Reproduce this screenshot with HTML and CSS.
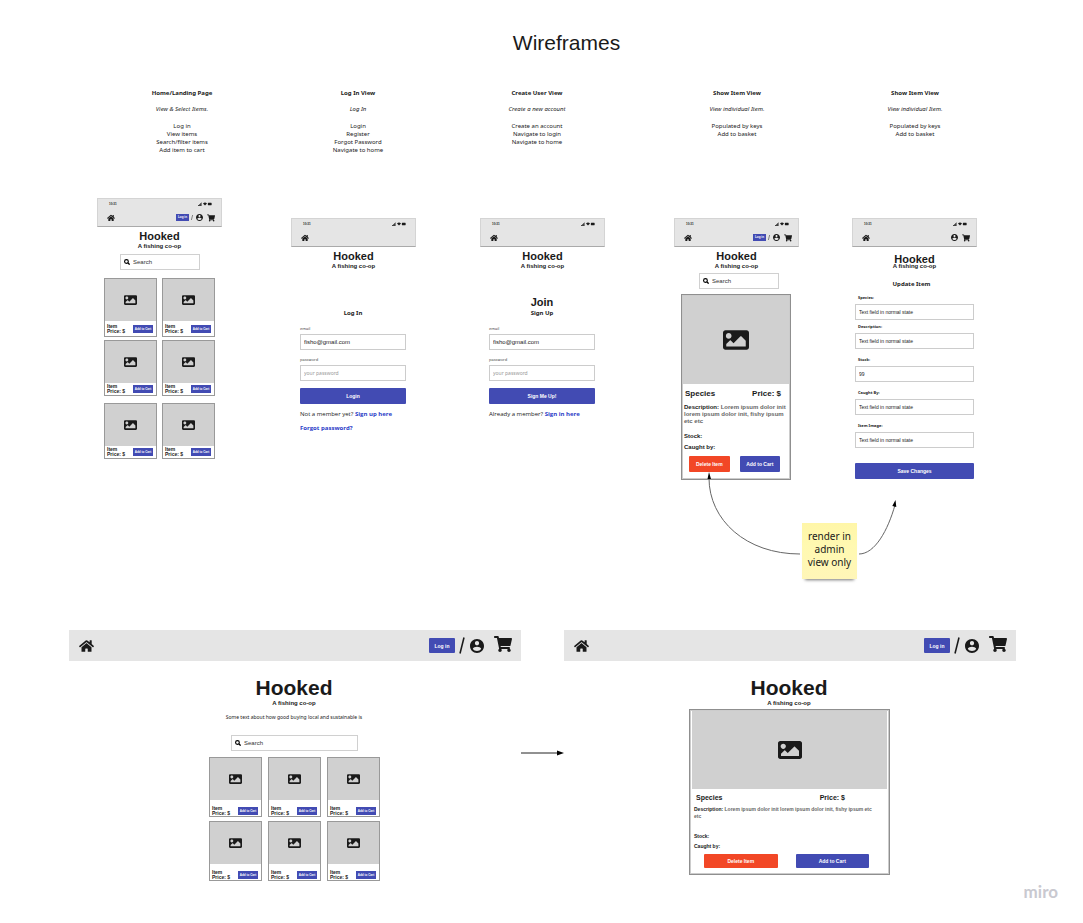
FILE: index.html
```html
<!DOCTYPE html>
<html lang="en">
<head>
<meta charset="utf-8">
<title>Wireframes</title>
<link rel="stylesheet" href="styles.css">
</head>
<body>
<svg class="defs" aria-hidden="true">
  <symbol id="home" viewBox="0 0 576 512"><path d="M280.37 148.26L96 300.11V464a16 16 0 0 0 16 16l112.06-.29a16 16 0 0 0 15.92-16V368a16 16 0 0 1 16-16h64a16 16 0 0 1 16 16v95.64a16 16 0 0 0 16 16.05L464 480a16 16 0 0 0 16-16V300L295.67 148.26a12.19 12.19 0 0 0-15.3 0zM571.6 251.47L488 182.56V44.05a12 12 0 0 0-12-12h-56a12 12 0 0 0-12 12v72.61L318.47 43a48 48 0 0 0-61 0L4.34 251.47a12 12 0 0 0-1.6 16.9l25.5 31A12 12 0 0 0 45.15 301l235.22-193.74a12.19 12.19 0 0 1 15.3 0L530.9 301a12 12 0 0 0 16.9-1.6l25.5-31a12 12 0 0 0-1.7-16.93z"/></symbol>
  <symbol id="cart" viewBox="0 0 576 512"><path d="M528.12 301.319l47.273-208C578.806 78.301 567.391 64 551.99 64H159.208l-9.166-44.81C147.758 8.021 137.93 0 126.529 0H24C10.745 0 0 10.745 0 24v16c0 13.255 10.745 24 24 24h69.883l70.248 343.435C147.325 417.1 136 435.222 136 456c0 30.928 25.072 56 56 56s56-25.072 56-56c0-15.674-6.447-29.835-16.824-40h209.647C430.447 426.165 424 440.326 424 456c0 30.928 25.072 56 56 56s56-25.072 56-56c0-22.172-12.888-41.332-31.579-50.405l5.517-24.276c3.413-15.018-8.002-29.319-23.403-29.319H218.117l-6.545-32h293.145c11.206 0 20.92-7.754 23.403-18.681z"/></symbol>
  <symbol id="image" viewBox="0 64 512 384"><path d="M464 448H48c-26.51 0-48-21.49-48-48V112c0-26.51 21.49-48 48-48h416c26.51 0 48 21.49 48 48v288c0 26.51-21.49 48-48 48zM112 120c-30.928 0-56 25.072-56 56s25.072 56 56 56 56-25.072 56-56-25.072-56-56-56zM64 384h384V272l-87.515-87.515c-4.686-4.686-12.284-4.686-16.971 0L208 320l-55.515-55.515c-4.686-4.686-12.284-4.686-16.971 0L64 336v48z"/></symbol>
  <symbol id="user" viewBox="2 2 20 20"><path d="M12 2C6.48 2 2 6.48 2 12s4.48 10 10 10 10-4.48 10-10S17.52 2 12 2zm0 3c1.66 0 3 1.34 3 3s-1.34 3-3 3-3-1.34-3-3 1.34-3 3-3zm0 14.2c-2.5 0-4.71-1.28-6-3.22.03-1.99 4-3.08 6-3.08 1.99 0 5.97 1.09 6 3.08-1.29 1.94-3.5 3.22-6 3.22z"/></symbol>
  <symbol id="search" viewBox="0 0 16 16"><circle cx="6.5" cy="6.5" r="5" fill="none" stroke="currentColor" stroke-width="3"/><path d="M10 10l5 5" stroke="currentColor" stroke-width="3.4"/></symbol>
  <symbol id="slash" viewBox="0 0 6 16"><path d="M1 16L5 0" stroke="currentColor" stroke-width="1.6"/></symbol>
  <symbol id="status" viewBox="0 0 28 8"><path d="M0 6h1.6v2H0zM2.2 4.500h1.600V8H2.200zM4.400 2.500H6V8H4.400zM6.600 1h1V8h-1zM10 3.200Q14 -.8 18 3.200L14 7zM20.500 1.500h6a.8.8 0 0 1 .8.8v3.400a.8.8 0 0 1-.8.8h-6a.8.8 0 0 1-.8-.8V2.300a.8.8 0 0 1 .8-.8z"/></symbol>
</svg>

<main class="board">
  <h1 class="board-title">Wireframes</h1>

  <section class="note note-home"><h2>Home/Landing Page</h2><p><em>View &amp; Select Items.</em></p><ul><li>Log in</li><li>View items</li><li>Search/filter items</li><li>Add item to cart</li></ul></section>
  <section class="note note-login"><h2>Log In View</h2><p><em>Log In</em></p><ul><li>Login</li><li>Register</li><li>Forgot Password</li><li>Navigate to home</li></ul></section>
  <section class="note note-create"><h2>Create User View</h2><p><em>Create a new account</em></p><ul><li>Create an account</li><li>Navigate to login</li><li>Navigate to home</li></ul></section>
  <section class="note note-show"><h2>Show Item View</h2><p><em>View individual Item.</em></p><ul><li>Populated by keys</li><li>Add to basket</li></ul></section>
  <section class="note note-edit"><h2>Show Item View</h2><p><em>View individual Item.</em></p><ul><li>Populated by keys</li><li>Add to basket</li></ul></section>

  <article class="phone phone-home">
    <header class="bar">
      <div class="status"><span>10:31</span><svg><use href="#status"/></svg></div>
      <nav class="nav"><svg class="home"><use href="#home"/></svg><button class="login">Log in</button><svg class="slash"><use href="#slash"/></svg><svg class="user"><use href="#user"/></svg><svg class="cart"><use href="#cart"/></svg></nav>
    </header>
    <h2 class="brand">Hooked</h2><p class="tagline">A fishing co-op</p>
    <label class="search"><svg><use href="#search"/></svg><input type="search" placeholder="Search" aria-label="Search"></label>
    <div class="cards">
      <div class="row row-tall">
        <div class="card"><div class="thumb"><svg><use href="#image"/></svg></div><div class="info"><p>Item<br>Price: $</p><button>Add to Cart</button></div></div>
        <div class="card"><div class="thumb"><svg><use href="#image"/></svg></div><div class="info"><p>Item<br>Price: $</p><button>Add to Cart</button></div></div>
      </div>
      <div class="row">
        <div class="card"><div class="thumb"><svg><use href="#image"/></svg></div><div class="info"><p>Item<br>Price: $</p><button>Add to Cart</button></div></div>
        <div class="card"><div class="thumb"><svg><use href="#image"/></svg></div><div class="info"><p>Item<br>Price: $</p><button>Add to Cart</button></div></div>
      </div>
      <div class="row row-last">
        <div class="card"><div class="thumb"><svg><use href="#image"/></svg></div><div class="info"><p>Item<br>Price: $</p><button>Add to Cart</button></div></div>
        <div class="card"><div class="thumb"><svg><use href="#image"/></svg></div><div class="info"><p>Item<br>Price: $</p><button>Add to Cart</button></div></div>
      </div>
    </div>
  </article>

  <article class="phone phone-login">
    <header class="bar">
      <div class="status"><span>10:31</span><svg><use href="#status"/></svg></div>
      <nav class="nav"><svg class="home"><use href="#home"/></svg></nav>
    </header>
    <h2 class="brand">Hooked</h2><p class="tagline">A fishing co-op</p>
    <form class="account">
      <div class="heading"><h3>Log In</h3></div>
      <label for="l-email">email</label><input id="l-email" type="text" value="fisho@gmail.com">
      <label for="l-pass">password</label><input id="l-pass" type="password" placeholder="your password">
      <button type="button" class="wide">Login</button>
      <p>Not a member yet? <a href="#">Sign up here</a></p>
      <p><a href="#">Forgot password?</a></p>
    </form>
  </article>

  <article class="phone phone-create">
    <header class="bar">
      <div class="status"><span>10:31</span><svg><use href="#status"/></svg></div>
      <nav class="nav"><svg class="home"><use href="#home"/></svg></nav>
    </header>
    <h2 class="brand">Hooked</h2><p class="tagline">A fishing co-op</p>
    <form class="account">
      <div class="heading"><h2 class="join">Join</h2><h3>Sign Up</h3></div>
      <label for="c-email">email</label><input id="c-email" type="text" value="fisho@gmail.com">
      <label for="c-pass">password</label><input id="c-pass" type="password" placeholder="your password">
      <button type="button" class="wide">Sign Me Up!</button>
      <p>Already a member? <a href="#">Sign in here</a></p>
    </form>
  </article>

  <article class="phone phone-show">
    <header class="bar">
      <div class="status"><span>10:31</span><svg><use href="#status"/></svg></div>
      <nav class="nav"><svg class="home"><use href="#home"/></svg><button class="login">Log in</button><svg class="slash"><use href="#slash"/></svg><svg class="user"><use href="#user"/></svg><svg class="cart"><use href="#cart"/></svg></nav>
    </header>
    <h2 class="brand">Hooked</h2><p class="tagline">A fishing co-op</p>
    <label class="search"><svg><use href="#search"/></svg><input type="search" placeholder="Search" aria-label="Search"></label>
    <div class="item">
      <div class="photo"><svg><use href="#image"/></svg></div>
      <div class="item-title"><span>Species</span><span>Price: $</span></div>
      <p class="desc"><b>Description:</b> Lorem ipsum dolor init lorem ipsum dolor init, fishy ipsum etc etc</p>
      <p class="fact">Stock:</p><p class="fact">Caught by:</p>
      <div class="actions"><button class="danger">Delete Item</button><button>Add to Cart</button></div>
    </div>
  </article>

  <article class="phone phone-edit">
    <header class="bar">
      <div class="status"><span>10:31</span><svg><use href="#status"/></svg></div>
      <nav class="nav"><svg class="home"><use href="#home"/></svg><svg class="user"><use href="#user"/></svg><svg class="cart"><use href="#cart"/></svg></nav>
    </header>
    <h2 class="brand">Hooked</h2><p class="tagline">A fishing co-op</p>
    <form class="edit">
      <h3>Update Item</h3>
      <div class="field"><label for="e1">Species:</label><input id="e1" type="text" value="Text field in normal state"></div>
      <div class="field field-near"><label for="e2">Description:</label><input id="e2" type="text" value="Text field in normal state"></div>
      <div class="field"><label for="e3">Stock:</label><input id="e3" type="text" value="99"></div>
      <div class="field"><label for="e4">Caught By:</label><input id="e4" type="text" value="Text field in normal state"></div>
      <div class="field"><label for="e5">Item Image:</label><input id="e5" type="text" value="Text field in normal state"></div>
      <button type="button" class="wide">Save Changes</button>
    </form>
  </article>

  <svg class="link link-admin" viewBox="0 0 200 90"><path class="line" d="M100 84C46 84 9 50 9 8M159 84C175 84 188 60 195 35"/><path d="M9 2l2 7H7.500zM195.500 30l.8 7-4-1z"/></svg>
  <aside class="sticky"><p>render in<br>admin<br>view only</p></aside>

  <article class="desktop desktop-home">
    <nav class="nav"><svg class="home"><use href="#home"/></svg><button class="login">Log in</button><svg class="slash"><use href="#slash"/></svg><svg class="user"><use href="#user"/></svg><svg class="cart"><use href="#cart"/></svg></nav>
    <h2 class="brand">Hooked</h2><p class="tagline">A fishing co-op</p>
    <p class="intro">Some text about how good buying local and sustainable is</p>
    <label class="search"><svg><use href="#search"/></svg><input type="search" placeholder="Search" aria-label="Search"></label>
    <div class="cards">
      <div class="card"><div class="thumb"><svg><use href="#image"/></svg></div><div class="info"><p>Item<br>Price: $</p><button>Add to Cart</button></div></div>
      <div class="card"><div class="thumb"><svg><use href="#image"/></svg></div><div class="info"><p>Item<br>Price: $</p><button>Add to Cart</button></div></div>
      <div class="card"><div class="thumb"><svg><use href="#image"/></svg></div><div class="info"><p>Item<br>Price: $</p><button>Add to Cart</button></div></div>
      <div class="card"><div class="thumb"><svg><use href="#image"/></svg></div><div class="info"><p>Item<br>Price: $</p><button>Add to Cart</button></div></div>
      <div class="card"><div class="thumb"><svg><use href="#image"/></svg></div><div class="info"><p>Item<br>Price: $</p><button>Add to Cart</button></div></div>
      <div class="card"><div class="thumb"><svg><use href="#image"/></svg></div><div class="info"><p>Item<br>Price: $</p><button>Add to Cart</button></div></div>
    </div>
  </article>

  <svg class="link link-next" viewBox="0 0 43 8"><path class="line dark" d="M0 4h38"/><path d="M43 4l-7 2.500v-5z"/></svg>

  <article class="desktop desktop-show">
    <nav class="nav"><svg class="home"><use href="#home"/></svg><button class="login">Log in</button><svg class="slash"><use href="#slash"/></svg><svg class="user"><use href="#user"/></svg><svg class="cart"><use href="#cart"/></svg></nav>
    <h2 class="brand">Hooked</h2><p class="tagline">A fishing co-op</p>
    <div class="item">
      <div class="photo"><svg><use href="#image"/></svg></div>
      <div class="item-title"><span>Species</span><span>Price: $</span></div>
      <p class="desc"><b>Description:</b> Lorem ipsum dolor init lorem ipsum dolor init, fishy ipsum etc etc</p>
      <p class="fact">Stock:</p><p class="fact">Caught by:</p>
      <div class="actions"><button class="danger">Delete Item</button><button>Add to Cart</button></div>
    </div>
  </article>

  <div class="logo">miro</div>
</main>
</body>
</html>
```

FILE: styles.css
```css
* { box-sizing: border-box; }
body { margin: 0; background: #fff; color: #1a1a1a; font-family: "Liberation Sans", Arial, sans-serif; }
h1, h2, h3, p, ul { margin: 0; padding: 0; }
ul { list-style: none; }
svg { display: block; fill: currentColor; flex: none; }
.defs { position: absolute; width: 0; height: 0; }
button { border: 0; padding: 0; border-radius: 1px; background: #424bb3; color: #fff; font: bold 5px/8px "Liberation Sans", Arial, sans-serif; }
input { border: 1px solid #ccc; border-radius: 0; background: #fff; color: #1a1a1a; font: 5px/8px "Liberation Sans", Arial, sans-serif; min-width: 0; outline: 0; }
input::placeholder { color: #999; opacity: 1; }
a { color: #2a3cc7; font-weight: bold; text-decoration: none; }

/* board */
.board { position: relative; min-height: 923px; overflow: hidden; }
.board-title { padding: 30px 0 0 50px; font-size: 21px; line-height: 26px; font-weight: normal; text-align: center; }

.note { position: absolute; top: 89px; width: 100px; text-align: center; font: 6px/8px "Noto Sans", "Open Sans", sans-serif; }
.note h2 { font-size: 6px; line-height: 8px; margin-bottom: 8px; }
.note p { margin-bottom: 9px; }
.note-home { left: 132px; }
.note-login { left: 308px; }
.note-create { left: 487px; }
.note-show { left: 687px; }
.note-edit { left: 865px; }

/* phones */
.phone { position: absolute; top: 218px; width: 125px; }
.phone-home { left: 97px; top: 198px; }
.phone-login { left: 291px; }
.phone-create { left: 480px; }
.phone-show { left: 674px; }
.phone-edit { left: 852px; }
.bar { height: 29px; padding: 3px 6px 0 9px; background: #e5e5e5; border: 1px solid #d4d4d4; border-bottom-color: #aaa; }
.status { display: flex; justify-content: space-between; align-items: center; height: 4px; padding: 0 3px 0 2px; font-size: 3px; line-height: 4px; font-weight: bold; }
.status svg { width: 14px; height: 4px; }
.nav { display: flex; align-items: center; }
.nav .home { margin-right: auto; }
.bar .nav { height: 9px; margin-top: 7px; }
.bar .home { width: 8px; height: 8px; }
.bar .login { width: 13px; height: 7px; font-size: 3px; line-height: 7px; border-radius: 0; }
.bar .slash { width: 2px; height: 5px; margin: 0 3px 0 2px; }
.bar .user { width: 7px; height: 7px; margin-right: 4px; }
.bar .cart { width: 8px; height: 8px; }

.brand { text-align: center; font-size: 11px; line-height: 11px; }
.phone .brand { margin-top: 4px; }
.tagline { text-align: center; font-size: 6px; line-height: 8px; font-weight: bold; }
.phone-edit .brand { margin-top: 7px; margin-bottom: -3px; }

.search { display: flex; align-items: center; gap: 3px; height: 16px; padding: 0 3px; border: 1px solid #d0d0d0; background: #fff; }
.search svg { width: 6px; height: 6px; color: #000; }
.search input { flex: 1; border: 0; padding: 0; background: transparent; font-size: 6px; line-height: 12px; }
.search input::placeholder { color: #333; }
.phone .search { width: 80px; margin: 4px 0 0 23px; }
.phone-show .search { margin-top: 3px; margin-left: 25px; }

/* product cards */
.card { display: flex; flex-direction: column; border: 1px solid #999; overflow: hidden; background: #fff; }
.thumb { display: grid; place-items: center; background: #d0d0d0; flex: none; height: 42px; }
.thumb svg { width: 13px; height: 10px; }
.info { flex: 1; display: flex; align-items: center; justify-content: space-between; padding: 0 3px 0 2px; }
.info p { font-size: 5px; line-height: 5px; font-weight: bold; }
.info button { width: 20px; height: 8px; font-size: 3px; line-height: 8px; border-radius: 0; }
.phone .cards { width: 111px; margin: 8px 0 0 7px; }
.row { display: grid; grid-template-columns: 1fr 1fr; gap: 5px; height: 56px; margin-top: 3px; }
.row-tall { height: 59px; margin-top: 0; }
.row-last { margin-top: 7px; }

/* account forms */
.account { display: flex; flex-direction: column; margin: 0 10px 0 9px; }
.heading { height: 47px; display: flex; flex-direction: column; justify-content: flex-end; text-align: center; }
.heading h3, .edit h3 { font: bold 6px/8px "Noto Sans", "Open Sans", sans-serif; }
.join { font-size: 11px; line-height: 14px; }
.account label { font: 4px/6px "Noto Sans", sans-serif; color: #444; margin-top: 7px; }
.heading + label { margin-top: 9px; }
.account input, .edit input { height: 16px; padding: 0 3px; }
.account label + input { margin-top: 2px; }
.account input { font-size: 6px; }
.account input::placeholder { font-family: "Noto Sans", sans-serif; font-size: 5px; }
.wide { height: 16px; }
.account .wide { margin-top: 7px; }
.account p { margin-top: 6px; font: 6px/8px "Open Sans", "Noto Sans", sans-serif; white-space: nowrap; }
.account a { font-weight: bold; }

.edit { display: flex; flex-direction: column; padding: 0 3px; }
.edit h3 { margin: 10px 0 4px; padding-right: 6px; text-align: center; }
.field { display: flex; flex-direction: column; margin-top: 8px; }
.field:first-of-type { margin-top: 3px; }
.field-near { margin-top: 4px; }
.field label { padding-left: 3px; margin-bottom: 3px; font: bold 4px/6px "Noto Sans", "Open Sans", sans-serif; }
.edit .wide { margin-top: 15px; }

/* item detail */
.item { border: 1px solid #8f8f8f; outline: 1px solid #ccc; outline-offset: -2px; background: #fff; }
.photo { display: grid; place-items: center; background: #d0d0d0; }
.item-title { display: flex; justify-content: space-between; font-weight: bold; }
.desc { color: #666; font-weight: bold; }
.desc b { color: #1a1a1a; }
.fact { font-weight: bold; }
.actions { display: flex; }
.actions .danger { background: #f24726; }
.actions button { flex: 1; }
.phone .item { width: 110px; margin: 5px 0 0 7px; padding: 1px 1px 7px; }
.phone .photo { height: 88px; }
.phone .photo svg { width: 26px; height: 20px; }
.phone .item-title { padding: 5px 8px 0 2px; font-size: 8px; line-height: 10px; }
.phone .desc { margin: 5px 0 7px 1px; font-size: 6px; line-height: 7px; }
.phone .fact { margin: 0 0 3px 1px; font-size: 6px; line-height: 8px; }
.phone .actions { gap: 10px; padding: 2px 9px 0 6px; }
.phone .actions button { height: 16px; }

/* desktop screens */
.desktop { position: absolute; top: 630px; width: 452px; }
.desktop-home { left: 69px; }
.desktop-show { left: 564px; }
.desktop .nav { height: 31px; padding: 0 9px 0 10px; background: #e5e5e5; }
.desktop .home { width: 15px; height: 14px; }
.desktop .login { width: 26px; height: 15px; }
.desktop .slash { width: 6px; height: 17px; margin: 0 5px 0 4px; }
.desktop .user { width: 14px; height: 14px; margin-right: 10px; }
.desktop .cart { width: 18px; height: 16px; margin-bottom: 3px; }
.desktop .brand { margin-top: 16px; padding-right: 2px; font-size: 21px; line-height: 22px; }
.desktop .tagline, .intro { padding-right: 2px; }
.intro { margin-top: 6px; text-align: center; font: 5px/8px "Noto Sans", "Open Sans", sans-serif; }
.desktop .search { width: 127px; margin: 14px 0 0 162px; }
.desktop .cards { display: grid; grid-template-columns: repeat(3, 53px); column-gap: 6px; row-gap: 4px; width: 171px; margin: 6px 0 0 140px; }
.desktop .card { height: 60px; }
.desktop .info { padding-top: 5px; }
.desktop .item { width: 201px; margin: 2px 0 0 125px; padding: 1px 2px 6px; }
.desktop .photo { height: 78px; }
.desktop .photo svg { width: 24px; height: 18px; }
.desktop .item-title { padding: 4px 42px 0 4px; font-size: 7px; line-height: 9px; }
.desktop .desc { margin: 4px 8px 12px 2px; font-size: 5px; line-height: 7px; }
.desktop .fact { margin: 0 0 2px 2px; font-size: 5px; line-height: 8px; }
.desktop .actions { gap: 18px; padding: 2px 18px 0 12px; }
.desktop .actions button { height: 14px; }

/* connectors and sticky */
.link { position: absolute; overflow: visible; color: #000; }
.line { fill: none; stroke: #666; stroke-width: 1; }
.dark { stroke: #222; }
.link-admin { left: 700px; top: 470px; width: 200px; height: 90px; }
.link-next { left: 521px; top: 749px; width: 43px; height: 8px; }
.sticky { position: absolute; left: 802px; top: 523px; width: 55px; height: 56px; padding-bottom: 3px; display: grid; place-items: center; background: linear-gradient(#fff6a8, #fff9b1 40%, #fff6b8); box-shadow: 0 4px 3px -3px #777; text-align: center; font: 10px/13px "Noto Sans", "Open Sans", sans-serif; }
.sticky p { white-space: nowrap; }
.logo { position: absolute; right: 25px; bottom: 21px; color: #c9c9d0; font: bold 17px/20px Lato, sans-serif; }
```
